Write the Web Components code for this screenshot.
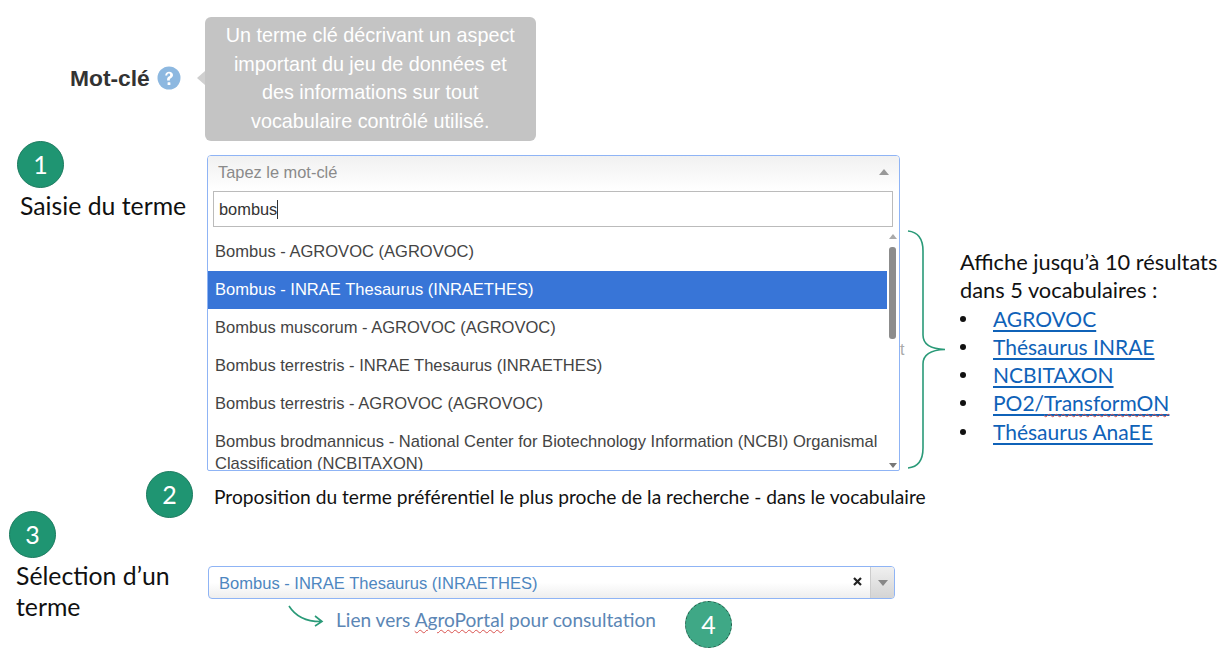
<!DOCTYPE html>
<html lang="fr">
<head>
<meta charset="utf-8">
<title>Mot-clé</title>
<style>
  html, body { margin: 0; background: #fff; }
  body { font-family: "Liberation Sans", Arial, sans-serif; overflow: hidden; }
</style>
</head>
<body>
<x-slide>
  <x-field-label slot="label">Mot-clé</x-field-label>
  <x-tooltip slot="tip">Un terme clé décrivant un aspect<br>important du jeu de données et<br>des informations sur tout<br>vocabulaire contrôlé utilisé.</x-tooltip>

  <x-note slot="entry" step="1" style="--step-left:17px;--text-left:20px">Saisie du terme</x-note>

  <x-open-select slot="select" placeholder="Tapez le mot-clé" query="bombus">
    <x-option>Bombus - AGROVOC (AGROVOC)</x-option>
    <x-option active>Bombus - INRAE Thesaurus (INRAETHES)</x-option>
    <x-option>Bombus muscorum - AGROVOC (AGROVOC)</x-option>
    <x-option>Bombus terrestris - INRAE Thesaurus (INRAETHES)</x-option>
    <x-option>Bombus terrestris - AGROVOC (AGROVOC)</x-option>
    <x-option>Bombus brodmannicus - National Center for Biotechnology Information (NCBI) Organismal Classification (NCBITAXON)</x-option>
  </x-open-select>

  <x-vocab-list slot="vocab">
    <a href="#">AGROVOC</a>
    <a href="#">Thésaurus INRAE</a>
    <a href="#">NCBITAXON</a>
    <a href="#">PO2/<span class="typo">TransformON</span></a>
    <a href="#">Thésaurus AnaEE</a>
  </x-vocab-list>

  <x-step slot="proposal-step">2</x-step>
  <span slot="proposal">Proposition du terme préférentiel le plus proche de la recherche - dans le vocabulaire</span>

  <x-note slot="pick" step="3" style="--step-left:9px;--text-left:16px">Sélection d’un terme</x-note>
  <x-selected slot="selected">Bombus - INRAE Thesaurus (INRAETHES)</x-selected>
  <x-link-hint slot="hint">Lien vers <span class="typo">AgroPortal</span> pour consultation</x-link-hint>
</x-slide>

<script>
'use strict';

const NOTE_FONT = '"Lato", "Open Sans", sans-serif';

const stepTemplate = document.createElement('template');
stepTemplate.innerHTML = `
<style>
  :host {
    display: flex;
    flex: none;
    align-items: center;
    justify-content: center;
    box-sizing: border-box;
    width: 47px;
    height: 47px;
    border-radius: 50%;
    background: #1f9572;
    border: 1px solid #1a7a5e;
    color: #fff;
    font: 25px/1 ${NOTE_FONT};
  }
  :host([dashed]) {
    background: #3fa886;
    border: 1.5px dashed #1f5f4a;
  }
</style>
<slot></slot>`;

class XStep extends HTMLElement {
  constructor() {
    super();
    this.attachShadow({ mode: 'open' });
    this.shadowRoot.appendChild(stepTemplate.content.cloneNode(true));
  }
}
customElements.define('x-step', XStep);

const noteTemplate = document.createElement('template');
noteTemplate.innerHTML = `
<style>
  :host {
    display: block;
    color: #111;
    font: 24.800px/31px ${NOTE_FONT};
  }
  x-step { margin-left: var(--step-left, 0); }
  p { margin: 2px 0 0 var(--text-left, 20px); width: 178px; }
</style>
<x-step></x-step>
<p><slot></slot></p>`;

class XNote extends HTMLElement {
  constructor() {
    super();
    this.attachShadow({ mode: 'open' });
    this.shadowRoot.appendChild(noteTemplate.content.cloneNode(true));
  }

  connectedCallback() {
    this.shadowRoot.querySelector('x-step').textContent = this.getAttribute('step');
  }
}
customElements.define('x-note', XNote);

const labelTemplate = document.createElement('template');
labelTemplate.innerHTML = `
<style>
  :host {
    display: inline-flex;
    align-items: center;
    gap: 7px;
    color: #333;
    font: bold 22.800px/24px "Liberation Sans", sans-serif;
  }
  svg { display: block; }
</style>
<slot></slot>
<svg width="24" height="24" viewBox="0 0 24 24">
  <circle cx="12" cy="12" r="11.5" fill="#8db8e0"/>
  <path d="M8.2 9.4c.2-2.4 1.8-3.7 3.9-3.7 2.300 0 3.900 1.400 3.900 3.300 0 1.500-.9 2.300-1.900 3-.9.600-1.300 1-1.300 2v.4h-2.700v-.7c0-1.500.6-2.300 1.700-3.100.9-.6 1.400-1 1.400-1.700 0-.8-.6-1.300-1.400-1.300-.9 0-1.500.6-1.600 1.800z" fill="#fff"/>
  <rect x="10.600" y="16.300" width="2.800" height="2.800" rx=".4" fill="#fff"/>
</svg>`;

class XFieldLabel extends HTMLElement {
  constructor() {
    super();
    this.attachShadow({ mode: 'open' });
    this.shadowRoot.appendChild(labelTemplate.content.cloneNode(true));
  }
}
customElements.define('x-field-label', XFieldLabel);

const tooltipTemplate = document.createElement('template');
tooltipTemplate.innerHTML = `
<style>
  :host {
    display: block;
    position: relative;
    box-sizing: border-box;
    width: 331px;
    height: 124px;
    padding: 4px 0;
    border-radius: 6px;
    background: #c4c4c4;
    color: #fff;
    font: 19.800px/28.700px "Liberation Sans", sans-serif;
    text-align: center;
  }
  :host::before {
    content: "";
    position: absolute;
    left: -8px;
    top: 54px;
    border-style: solid;
    border-width: 7px 8px 7px 0;
    border-color: transparent #cfcfcf transparent transparent;
  }
</style>
<slot></slot>`;

class XTooltip extends HTMLElement {
  constructor() {
    super();
    this.attachShadow({ mode: 'open' });
    this.shadowRoot.appendChild(tooltipTemplate.content.cloneNode(true));
  }
}
customElements.define('x-tooltip', XTooltip);

const optionTemplate = document.createElement('template');
optionTemplate.innerHTML = `
<style>
  :host {
    display: block;
    padding: 8px 7px;
    color: #444;
    font: 16.550px/22px "Liberation Sans", sans-serif;
  }
  :host([active]) {
    background: #3875d7;
    color: #fff;
  }
</style>
<slot></slot>`;

class XOption extends HTMLElement {
  constructor() {
    super();
    this.attachShadow({ mode: 'open' });
    this.shadowRoot.appendChild(optionTemplate.content.cloneNode(true));
  }
}
customElements.define('x-option', XOption);

const openSelectTemplate = document.createElement('template');
openSelectTemplate.innerHTML = `
<style>
  :host {
    display: block;
    position: relative;
    box-sizing: border-box;
    width: 693px;
    height: 316px;
    border: 1px solid #8fb4f5;
    border-radius: 4px 4px 2px 2px;
    background: #fff;
    overflow: hidden;
    font: 16.400px/22px "Liberation Sans", sans-serif;
  }
  .head {
    display: flex;
    align-items: center;
    justify-content: space-between;
    height: 35px;
    padding: 0 10px 3px 10px;
    box-sizing: border-box;
    color: #8a8a8a;
    background: linear-gradient(#f1f1f1, #fff);
  }
  .head svg { display: block; }
  .search {
    box-sizing: border-box;
    height: 36px;
    margin: 0 6px 0 5px;
    padding: 6px 5px;
    border: 1px solid #bbb;
    color: #333;
  }
  .caret {
    display: inline-block;
    width: 1px;
    height: 19px;
    background: #333;
    vertical-align: -4px;
  }
  .body {
    display: flex;
    height: 237px;
    margin-top: 6px;
  }
  .list {
    width: 679px;
    height: 237px;
    overflow: hidden;
    flex: none;
  }
  .bar {
    display: flex;
    flex-direction: column;
    align-items: center;
    justify-content: space-between;
    width: 7px;
    margin-left: 2px;
    padding: 1px 0 2px;
    box-sizing: border-box;
  }
  .thumb {
    width: 7px;
    height: 92px;
    margin: 0 0 117px;
    border-radius: 3px;
    background: #8c8c8c;
  }
  .bar svg { display: block; flex: none; }
</style>
<div class="head">
  <span class="placeholder"></span>
  <svg width="10" height="6" viewBox="0 0 10 6"><path d="M5 0l5 6H0z" fill="#999"/></svg>
</div>
<div class="search"><span class="query"></span><span class="caret"></span></div>
<div class="body">
  <div class="list"><slot></slot></div>
  <div class="bar">
    <svg width="8" height="5" viewBox="0 0 8 5"><path d="M4 0l4 5H0z" fill="#aaa"/></svg>
    <div class="thumb"></div>
    <svg width="8" height="5" viewBox="0 0 8 5"><path d="M4 5l4-5H0z" fill="#777"/></svg>
  </div>
</div>`;

class XOpenSelect extends HTMLElement {
  constructor() {
    super();
    this.attachShadow({ mode: 'open' });
    this.shadowRoot.appendChild(openSelectTemplate.content.cloneNode(true));
  }

  connectedCallback() {
    this.shadowRoot.querySelector('.placeholder').textContent = this.getAttribute('placeholder');
    this.shadowRoot.querySelector('.query').textContent = this.getAttribute('query');
  }
}
customElements.define('x-open-select', XOpenSelect);

const vocabTemplate = document.createElement('template');
vocabTemplate.innerHTML = `
<style>
  :host {
    display: flex;
    align-items: center;
    gap: 13px;
    position: relative;
    height: 239px;
    margin-top: 75px;
    padding-left: 7px;
    color: #111;
    font: 21.800px/28.200px ${NOTE_FONT};
  }
  svg { flex: none; display: block; }
  .text { padding-bottom: 5px; }
  .behind {
    position: absolute;
    left: 0;
    top: 109px;
    color: #aaa;
    font: 16px/22px "Liberation Sans", sans-serif;
  }
  p { margin: 0; white-space: nowrap; }
  ul { margin: 0; padding: 0; list-style: none; }
  li { display: flex; align-items: center; white-space: nowrap; font-size: 21px; }
  li::before {
    content: "";
    width: 6px;
    height: 6px;
    margin: 0 27px 0 0;
    border-radius: 50%;
    background: #111;
  }
  ::slotted(a) { color: #0f62b8; }
</style>
<span class="behind">t</span>
<svg width="40" height="239" viewBox="0 0 40 239" fill="none" stroke="#2a9a78" stroke-width="1.600">
  <path d="M1 1c10 1 15 7 15 20v84c0 9 6 14 22 14.500C22 120 16 125 16 134v84c0 13-5 19-15 20"/>
</svg>
<div class="text">
  <p>Affiche jusqu’à 10 résultats<br>dans 5 vocabulaires :</p>
  <ul></ul>
</div>`;

class XVocabList extends HTMLElement {
  constructor() {
    super();
    this.attachShadow({ mode: 'open' });
    this.shadowRoot.appendChild(vocabTemplate.content.cloneNode(true));
  }

  connectedCallback() {
    const list = this.shadowRoot.querySelector('ul');
    [...this.querySelectorAll('a')].forEach((link, i) => {
      link.slot = 'item' + i;
      const item = document.createElement('li');
      const slot = document.createElement('slot');
      slot.name = link.slot;
      item.appendChild(slot);
      list.appendChild(item);
    });
  }
}
customElements.define('x-vocab-list', XVocabList);

const selectedTemplate = document.createElement('template');
selectedTemplate.innerHTML = `
<style>
  :host {
    display: flex;
    align-items: center;
    box-sizing: border-box;
    width: 687px;
    height: 33px;
    margin-left: 1px;
    border: 1px solid #8fb4f5;
    border-radius: 4px;
    background: linear-gradient(#fff 50%, #eee);
    color: #4d86c0;
    font: 16.550px/22px "Liberation Sans", sans-serif;
  }
  .text { flex: 1; padding: 3px 0 0 10px; }
  .clear { display: block; margin-right: 8px; margin-top: -3px; }
  .toggle {
    display: flex;
    align-items: center;
    justify-content: center;
    align-self: stretch;
    width: 23px;
    border-left: 1px solid #ccc;
    border-radius: 0 3px 3px 0;
    background: linear-gradient(#f0f0f0, #d4d4d4);
  }
</style>
<span class="text"><slot></slot></span>
<svg class="clear" width="9" height="9" viewBox="0 0 9 9"><path d="M1 1l7 7M8 1L1 8" stroke="#222" stroke-width="2.200"/></svg>
<span class="toggle"><svg width="10" height="6" viewBox="0 0 10 6"><path d="M5 6l5-6H0z" fill="#888"/></svg></span>`;

class XSelected extends HTMLElement {
  constructor() {
    super();
    this.attachShadow({ mode: 'open' });
    this.shadowRoot.appendChild(selectedTemplate.content.cloneNode(true));
  }
}
customElements.define('x-selected', XSelected);

const hintTemplate = document.createElement('template');
hintTemplate.innerHTML = `
<style>
  :host {
    display: flex;
    align-items: flex-start;
    margin: 2px 0 0 81px;
    color: #5b86b5;
    font: 19.100px/24px ${NOTE_FONT};
  }
  svg { display: block; flex: none; margin: 4px 12px 0 0; }
  span { margin-top: 7px; white-space: nowrap; }
  x-step { margin: 0 0 0 29px; }
</style>
<svg width="36" height="26" viewBox="0 0 36 26" fill="none" stroke="#2a9a78" stroke-width="1.600">
  <path d="M1 1c5 8 15 16 33 15.500M27 11l7 5.500L27 21"/>
</svg>
<span><slot></slot></span>
<x-step dashed>4</x-step>`;

class XLinkHint extends HTMLElement {
  constructor() {
    super();
    this.attachShadow({ mode: 'open' });
    this.shadowRoot.appendChild(hintTemplate.content.cloneNode(true));
  }
}
customElements.define('x-link-hint', XLinkHint);

const slideTemplate = document.createElement('template');
slideTemplate.innerHTML = `
<style>
  :host {
    display: grid;
    grid-template-columns: 207px 693px 1fr;
    grid-template-rows: 155px 316px 40px 144px;
    width: 1229px;
    height: 655px;
    overflow: hidden;
  }
  .top {
    grid-column: 1 / -1;
    display: flex;
    align-items: flex-start;
    padding: 17px 0 0 70px;
  }
  .top ::slotted(x-field-label) { margin: 49px 24px 0 0; }
  .entry { margin-top: -14px; }
  .vocab { min-width: 0; }
  .proposal {
    grid-column: 1 / -1;
    display: flex;
    align-items: flex-start;
    gap: 21px;
    padding-left: 146px;
    color: #111;
    font: 19.200px/24px ${NOTE_FONT};
    white-space: nowrap;
  }
  .proposal .text { margin-top: 14px; }
  .pick { grid-column: 1; }
  .chosen { grid-column: 2 / -1; padding-top: 55px; }
</style>
<div class="top"><slot name="label"></slot><slot name="tip"></slot></div>
<div class="entry"><slot name="entry"></slot></div>
<div class="select"><slot name="select"></slot></div>
<div class="vocab"><slot name="vocab"></slot></div>
<div class="proposal"><slot name="proposal-step"></slot><span class="text"><slot name="proposal"></slot></span></div>
<div class="pick"><slot name="pick"></slot></div>
<div class="chosen"><slot name="selected"></slot><slot name="hint"></slot></div>`;

class XSlide extends HTMLElement {
  constructor() {
    super();
    this.attachShadow({ mode: 'open' });
    this.shadowRoot.appendChild(slideTemplate.content.cloneNode(true));
  }
}
customElements.define('x-slide', XSlide);
</script>
<style>
  .typo { text-decoration: underline wavy #d9534f 1px; text-underline-offset: 2px; }
  x-vocab-list a { text-underline-offset: 3px; }
</style>
</body>
</html>
